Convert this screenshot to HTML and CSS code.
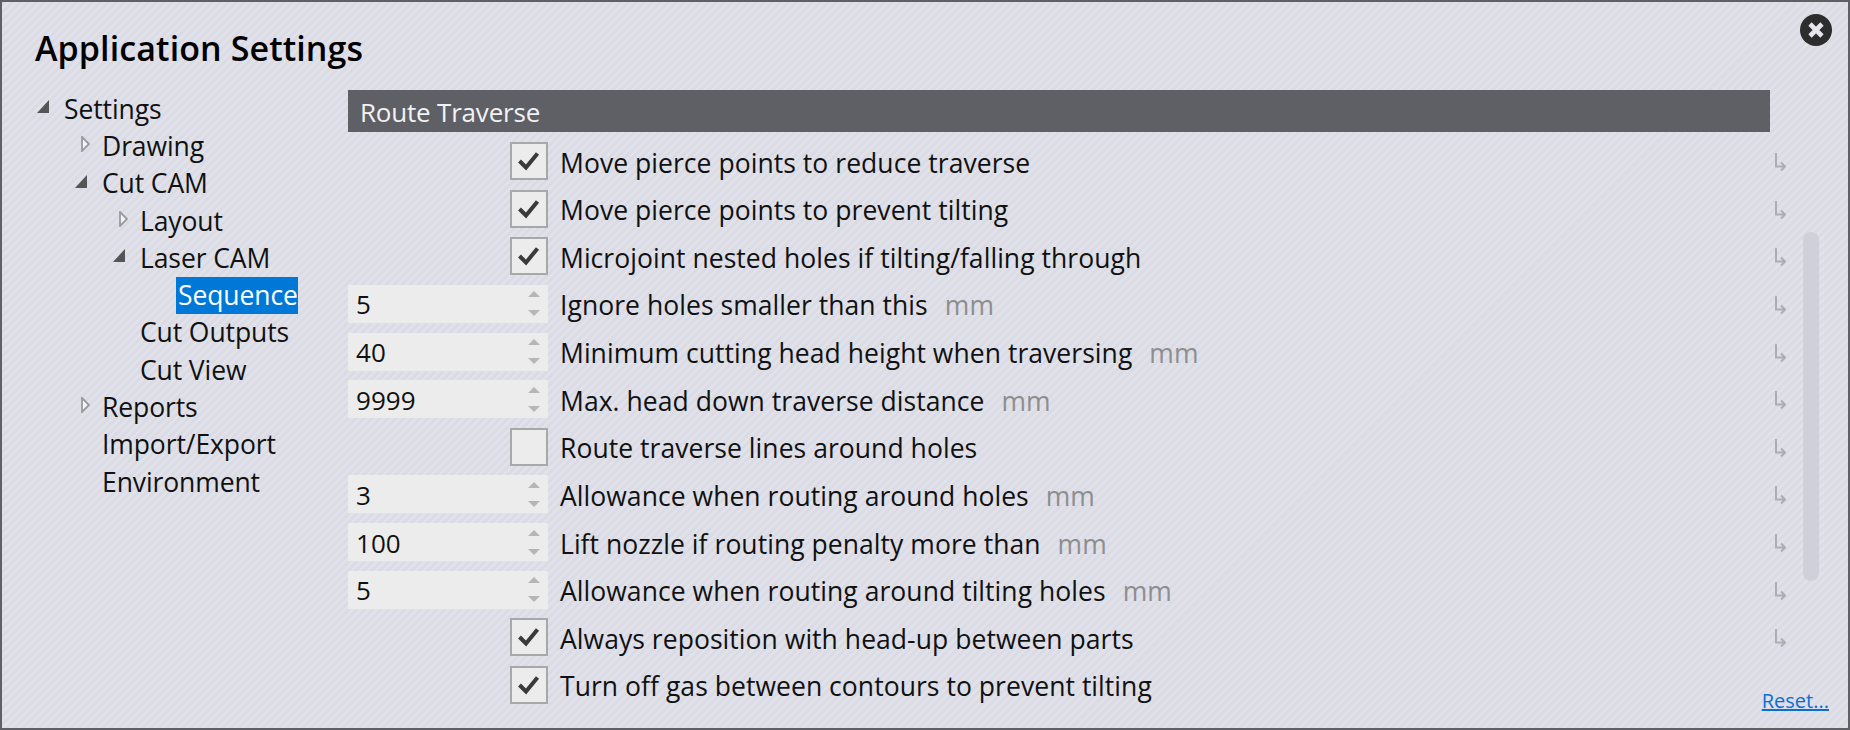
FILE: index.html
```html
<!DOCTYPE html>
<html lang="en">
<head>
<meta charset="utf-8">
<title>Application Settings</title>
<link rel="stylesheet" href="styles.css">
</head>
<body>
<svg class="defs" width="0" height="0" aria-hidden="true">
  <symbol id="check" viewBox="0 0 22 20"><path d="M1.5 10 L8 16.5 L19.5 2.5" fill="none" stroke="#3a3a3a" stroke-width="4"/></symbol>
  <symbol id="ret" viewBox="0 0 11 19"><path d="M1 0 V13.5 H9 M6 9.5 L10 13.5 L6 17.5" fill="none" stroke="#aeaeb2" stroke-width="2"/></symbol>
  <symbol id="open" viewBox="0 0 12 13"><path d="M12 0 V13 H0 Z" fill="#555"/></symbol>
  <symbol id="closed" viewBox="0 0 9 16"><path d="M1 1 L8 8 L1 15 Z" fill="#f4f4f6" stroke="#9a9a9e" stroke-width="1.8"/></symbol>
</svg>
<div class="dialog">
  <header class="head">
    <h1 class="title">Application Settings</h1>
    <button class="close" aria-label="Close"><svg viewBox="0 0 32 32" width="32" height="32"><circle cx="16" cy="16" r="16" fill="#2d2d2d"/><path d="M10 10 L22 22 M22 10 L10 22" stroke="#e6e6ec" stroke-width="4.6"/></svg></button>
  </header>
  <div class="main">
    <ul class="tree">
      <li class="node l0"><svg class="tw tw-open"><use href="#open"/></svg><span>Settings</span></li>
      <li class="node l1"><svg class="tw tw-closed"><use href="#closed"/></svg><span>Drawing</span></li>
      <li class="node l1"><svg class="tw tw-open"><use href="#open"/></svg><span>Cut CAM</span></li>
      <li class="node l2"><svg class="tw tw-closed"><use href="#closed"/></svg><span>Layout</span></li>
      <li class="node l2"><svg class="tw tw-open"><use href="#open"/></svg><span>Laser CAM</span></li>
      <li class="node l3"><span class="sel">Sequence</span></li>
      <li class="node l2"><span>Cut Outputs</span></li>
      <li class="node l2"><span>Cut View</span></li>
      <li class="node l1"><svg class="tw tw-closed"><use href="#closed"/></svg><span>Reports</span></li>
      <li class="node l1"><span>Import/Export</span></li>
      <li class="node l1"><span>Environment</span></li>
    </ul>
    <section class="panel">
      <h2 class="bar">Route Traverse</h2>
      <div class="rows">
        <div class="row"><div class="ctl"><span class="box"><svg class="tick"><use href="#check"/></svg></span></div><span class="lab">Move pierce points to reduce traverse</span><svg class="ret"><use href="#ret"/></svg></div>
        <div class="row"><div class="ctl"><span class="box"><svg class="tick"><use href="#check"/></svg></span></div><span class="lab">Move pierce points to prevent tilting</span><svg class="ret"><use href="#ret"/></svg></div>
        <div class="row"><div class="ctl"><span class="box"><svg class="tick"><use href="#check"/></svg></span></div><span class="lab">Microjoint nested holes if tilting/falling through</span><svg class="ret"><use href="#ret"/></svg></div>
        <div class="row"><div class="ctl"><span class="spin"><span class="val">5</span><span class="arrows"><i class="up"></i><i class="dn"></i></span></span></div><span class="lab">Ignore holes smaller than this</span><span class="unit">mm</span><svg class="ret"><use href="#ret"/></svg></div>
        <div class="row"><div class="ctl"><span class="spin"><span class="val">40</span><span class="arrows"><i class="up"></i><i class="dn"></i></span></span></div><span class="lab">Minimum cutting head height when traversing</span><span class="unit">mm</span><svg class="ret"><use href="#ret"/></svg></div>
        <div class="row"><div class="ctl"><span class="spin"><span class="val">9999</span><span class="arrows"><i class="up"></i><i class="dn"></i></span></span></div><span class="lab">Max. head down traverse distance</span><span class="unit">mm</span><svg class="ret"><use href="#ret"/></svg></div>
        <div class="row"><div class="ctl"><span class="box"></span></div><span class="lab">Route traverse lines around holes</span><svg class="ret"><use href="#ret"/></svg></div>
        <div class="row"><div class="ctl"><span class="spin"><span class="val">3</span><span class="arrows"><i class="up"></i><i class="dn"></i></span></span></div><span class="lab">Allowance when routing around holes</span><span class="unit">mm</span><svg class="ret"><use href="#ret"/></svg></div>
        <div class="row"><div class="ctl"><span class="spin"><span class="val">100</span><span class="arrows"><i class="up"></i><i class="dn"></i></span></span></div><span class="lab">Lift nozzle if routing penalty more than</span><span class="unit">mm</span><svg class="ret"><use href="#ret"/></svg></div>
        <div class="row"><div class="ctl"><span class="spin"><span class="val">5</span><span class="arrows"><i class="up"></i><i class="dn"></i></span></span></div><span class="lab">Allowance when routing around tilting holes</span><span class="unit">mm</span><svg class="ret"><use href="#ret"/></svg></div>
        <div class="row"><div class="ctl"><span class="box"><svg class="tick"><use href="#check"/></svg></span></div><span class="lab">Always reposition with head-up between parts</span><svg class="ret"><use href="#ret"/></svg></div>
        <div class="row"><div class="ctl"><span class="box"><svg class="tick"><use href="#check"/></svg></span></div><span class="lab">Turn off gas between contours to prevent tilting</span></div>
      </div>
    </section>
  </div>
  <div class="thumb"></div>
  <a class="reset" href="#">Reset...</a>
</div>
</body>
</html>
```

FILE: styles.css
```css
* { box-sizing: border-box; }
html, body { margin: 0; padding: 0; }
body { width: 1850px; height: 730px; overflow: hidden; font-family: "Open Sans", "Noto Sans", sans-serif; color: #111; }
.defs { position: absolute; }
.dialog {
  position: relative;
  width: 1850px; height: 730px;
  border: 2px solid #5f6066;
  background: repeating-linear-gradient(135deg, #dadbe4 0 2.83px, #e0e1e9 2.83px 5.66px);
  overflow: hidden;
}
.head { display: flex; justify-content: space-between; padding: 23px 16px 0 33px; height: 88px; }
.title { margin: 0; font-size: 34px; line-height: 46px; font-weight: 600; letter-spacing: 0.1px; color: #000; }
.close { position: absolute; top: 12px; right: 16px; padding: 0; border: 0; background: none; width: 32px; height: 32px; }
.close svg { display: block; }
.main { display: flex; }
.tree { list-style: none; margin: 0; padding: 0; width: 346px; flex: none; font-size: 26.5px; letter-spacing: -0.1px; }
.node { position: relative; display: flex; align-items: center; height: 37.3px; white-space: nowrap; }
.l0 { padding-left: 62px; }
.l1 { padding-left: 100px; }
.l2 { padding-left: 138px; }
.l3 { padding-left: 174px; }
.tw { position: absolute; }
.tw-open { width: 12px; height: 13px; top: 10px; }
.tw-closed { width: 9px; height: 16px; top: 9px; }
.l0 .tw-open { left: 35px; }
.l1 .tw-open { left: 73px; }
.l2 .tw-open { left: 111px; }
.l1 .tw-closed { left: 79px; }
.l2 .tw-closed { left: 117px; }
.sel { display: block; width: 122px; height: 37px; line-height: 36px; padding-left: 2px; background: #0078d7; color: #fff; }
.panel { width: 1438px; flex: none; }
.bar { margin: 0; width: 1422px; height: 42px; padding-left: 12px; background: #5f6066; color: #f2f2f4; font-size: 26px; font-weight: 400; line-height: 44px; letter-spacing: -0.2px; }
.rows { display: flex; flex-direction: column; gap: 9.64px; padding-top: 10px; }
.row { display: flex; align-items: center; height: 38px; font-size: 26.5px; letter-spacing: 0.05px; white-space: nowrap; }
.ctl { width: 200px; flex: none; display: flex; justify-content: flex-end; }
.box { display: flex; align-items: center; justify-content: center; width: 38px; height: 38px; border: 2px solid #a8a8ac; background: #ececec; }
.tick { width: 22px; height: 20px; }
.spin { display: flex; align-items: center; justify-content: space-between; width: 200px; height: 38px; padding: 0 8px; background: #ececec; font-size: 26px; }
.val { padding-top: 1px; }
.arrows { display: flex; flex-direction: column; gap: 13px; }
.arrows i { display: block; width: 0; height: 0; border-left: 6.5px solid transparent; border-right: 6.5px solid transparent; }
.arrows .up { border-bottom: 6.5px solid #b6b6b6; }
.arrows .dn { border-top: 6.5px solid #b6b6b6; }
.lab { margin-left: 12px; padding-top: 3px; }
.unit { margin-left: 17px; padding-top: 3px; color: #8e8e8e; }
.ret { width: 11px; height: 19px; margin: 3px 0 0 auto; flex: none; }
.thumb { position: absolute; left: 1801px; top: 230px; width: 16px; height: 349px; border-radius: 8px; background: #cfd0da; }
.reset { position: absolute; right: 19px; bottom: 14px; font-size: 20px; line-height: 26px; color: #0a6fd3; }
```
